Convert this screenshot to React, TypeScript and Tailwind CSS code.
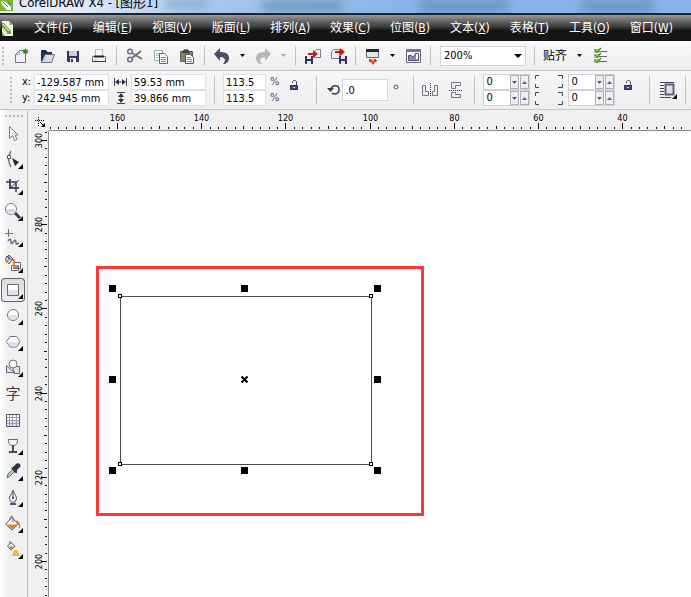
import { useEffect, useState } from "react";
import type { ReactNode } from "react";

const menus = [
  ["文件", "F"],
  ["编辑", "E"],
  ["视图", "V"],
  ["版面", "L"],
  ["排列", "A"],
  ["效果", "C"],
  ["位图", "B"],
  ["文本", "X"],
  ["表格", "T"],
  ["工具", "O"],
  ["窗口", "W"],
];

const UNIT = 8.42;

function Icon({ size = 20, children }: { size?: number; children: ReactNode }) {
  return (
    <svg width={size} height={size} viewBox={`0 0 ${size} ${size}`} fill="none" className="block shrink-0" aria-hidden="true">
      {children}
    </svg>
  );
}

function IconButton({ label, children }: { label: string; children: ReactNode }) {
  return (
    <button type="button" aria-label={label} className="flex h-6 w-[26px] shrink-0 items-center justify-center">
      <Icon>{children}</Icon>
    </button>
  );
}

function DropButton({ label, muted = false }: { label: string; muted?: boolean }) {
  return (
    <button type="button" aria-label={label} className="flex h-6 w-[15px] shrink-0 items-center justify-center">
      <svg width="5" height="3" viewBox="0 0 5 3" aria-hidden="true">
        <path d="M0 0h5L2.500 3z" fill={muted ? "#aaaaaa" : "#000000"} />
      </svg>
    </button>
  );
}

function Separator({ className = "" }: { className?: string }) {
  return <span className={`w-px shrink-0 bg-[#c3c3c7] ${className}`} />;
}

function Grip({ count, vertical = false }: { count: number; vertical?: boolean }) {
  return (
    <span className={vertical ? "flex shrink-0 flex-col gap-0.5" : "flex justify-center gap-0.5"}>
      {Array.from({ length: count }, (_, i) => (
        <span key={i} className="size-0.5 bg-[#bdbdbd]" />
      ))}
    </span>
  );
}

function TitleBar() {
  return (
    <header className="relative flex h-[13px] items-end overflow-hidden bg-linear-to-r from-[#e3edf7] from-10% via-[#a5c7ec] via-30% to-[#86b4e8] to-60%">
      <span className="absolute top-0 left-[166px] h-2 w-10 bg-[#5f87b4]/50 blur-xs" />
      <span className="absolute top-0 left-[262px] h-3 w-20 bg-[#54799f]/50 blur-xs" />
      <span className="absolute top-0 left-[420px] h-3 w-22 bg-[#54799f]/50 blur-xs" />
      <span className="absolute top-0 left-[582px] h-3 w-18 bg-[#54799f]/50 blur-xs" />
      <svg width="14" height="11" viewBox="0 0 14 11" className="mb-0.5 shrink-0" aria-hidden="true">
        <path d="M0 0h13v11H0z" fill="#7ab52c" />
        <path d="M1 1l5 1 5 5v3H7L2 5z" fill="#ffffff" />
        <path d="M3 2l5 5M8 2l3 3" stroke="#4d8417" />
      </svg>
      <h1 className="relative ml-[5px] text-[13px] leading-5 whitespace-nowrap text-black">CorelDRAW X4 - [图形1]</h1>
    </header>
  );
}

function MenuBar() {
  return (
    <nav className="flex h-7 items-center gap-5 overflow-hidden border-t-2 border-[#1d2430] bg-linear-to-b from-[#9a9a9a] via-[#3c3c3c] via-45% to-[#151515] to-60% text-xs text-white">
      <svg width="14" height="17" viewBox="0 0 14 17" className="shrink-0" aria-hidden="true">
        <path d="M2 1h7l4 4v11H2z" fill="#f4f8ee" />
        <path d="M9 1v4h4z" fill="#9ab77c" />
        <path d="M2 3h2l7 8v3H7L2 8z" fill="#6ea72b" />
        <path d="M3 4l6 7M3 8l4 5" stroke="#ffffff" />
        <path d="M2 12l3 4H2z" fill="#6ea72b" />
      </svg>
      {menus.map(([name, key]) => (
        <button key={name} type="button" className="shrink-0 leading-4 whitespace-nowrap">
          {name}(<span className="underline">{key}</span>)
        </button>
      ))}
    </nav>
  );
}

function Toolbar() {
  return (
    <div role="toolbar" aria-label="标准" className="flex h-[30px] items-center overflow-hidden border-b border-[#c6c6ca] bg-linear-to-b from-[#f9f9f9] to-[#ededee]">
      <span className="ml-0.5 flex w-1.5 shrink-0">
        <Grip count={5} vertical />
      </span>
      <IconButton label="新建">
        <path d="M4.500 16.500V8.500L8.500 4.500h6v12z" fill="#f1f1f7" stroke="#77778c" />
        <path d="M5 8.500h3.500V5" stroke="#a4a4b6" />
        <path d="M14.500 2.500v6M11.500 5.500h6M12.500 3.500l4 4M16.500 3.500l-4 4" stroke="#44a01e" />
        <circle cx="14.500" cy="5.500" r="2.300" fill="#2d8d0c" />
      </IconButton>
      <IconButton label="打开">
        <path d="M4 16V4h5l1.500 2H15v4H8z" fill="#262c4a" />
        <path d="M4.500 16.500L8 8.500h9.500l-3 8z" fill="#d9dbea" stroke="#666b88" />
      </IconButton>
      <IconButton label="保存">
        <path d="M4 5h12v11H5l-1-1z" fill="#34345f" />
        <path d="M6 5h8v5H6z" fill="#c9cbe4" />
        <path d="M7 12h6v4H7z" fill="#f5f5fa" />
        <path d="M8 13h2v3H8z" fill="#34345f" />
      </IconButton>
      <IconButton label="打印">
        <path d="M6.500 10V3.500h7V10" fill="#f5fbfb" stroke="#9cc0c0" />
        <path d="M3.500 10.500h13v5h-13z" fill="#f2f2ea" stroke="#77778a" />
        <path d="M5 10.500h10" stroke="#252538" strokeWidth="2" />
        <path d="M3 15.500h14" stroke="#34344e" />
        <path d="M5 13.500h3" stroke="#c1b86b" />
      </IconButton>
      <Separator className="ml-1 h-5" />
      <span className="ml-[5px] flex">
        <IconButton label="剪切">
          <circle cx="5" cy="5.500" r="2.300" stroke="#6c6c80" strokeWidth="1.500" />
          <circle cx="5" cy="13.500" r="2.300" stroke="#6c6c80" strokeWidth="1.500" />
          <path d="M7 7l10 6M7 12l9-7" stroke="#77777c" strokeWidth="2" />
        </IconButton>
        <IconButton label="复制">
          <path d="M3.500 4.500h8v10h-8z" fill="#f4fbf9" stroke="#8fb5ad" />
          <path d="M5 7.500h5M5 9.500h3M5 11.500h3" stroke="#9fc1ba" />
          <path d="M8.500 7.500h5l3 3v7h-8z" fill="#ffffff" stroke="#61617a" />
          <path d="M10 11.500h5M10 13.500h5M10 15.500h5" stroke="#7c7c95" />
        </IconButton>
        <IconButton label="粘贴">
          <path d="M3.500 5.500h12v10h-12z" fill="#8a8257" stroke="#676250" />
          <path d="M5 7c0-5 8-5 8 0z" fill="#44443e" />
          <path d="M8.500 8.500h5l3 3v6h-8z" fill="#ffffff" stroke="#55556f" />
          <path d="M10 11.500h4M10 13.500h5M10 15.500h5" stroke="#7c7c95" />
        </IconButton>
      </span>
      <Separator className="ml-1 h-5" />
      <span className="ml-1 flex">
        <IconButton label="撤消">
          <path d="M2 8l6-6v4c6 0 9 2 9 6s-3 6-6 6c3-3 3-7-3-7v4z" fill="#4e4e62" />
        </IconButton>
        <DropButton label="撤消列表" />
        <IconButton label="重做">
          <path d="M18 8l-6-6v4c-6 0-9 2-9 6s3 6 6 6c-3-3-3-7 3-7v4z" fill="#b7b7ba" />
        </IconButton>
        <DropButton label="重做列表" muted />
      </span>
      <Separator className="ml-1 h-5" />
      <span className="ml-1 flex">
        <IconButton label="导入">
          <path d="M11.500 11.500V5.500l2-2h4v8z" fill="#f3f3f8" stroke="#7b7b91" />
          <path d="M5 7h5V4l5 4-5 4V9H5z" fill="#c41c14" />
          <path d="M2 10h8v8H3l-1-1z" fill="#33335e" />
          <path d="M4 10h4v3H4zM4 15h4v3H4z" fill="#e5e6f3" />
        </IconButton>
        <IconButton label="导出">
          <path d="M2.500 12.500V5.500l2-2h6v9z" fill="#f3f3f8" stroke="#7b7b91" />
          <path d="M6 5h5V2l5 4-5 4V7H6z" fill="#c41c14" />
          <path d="M10 10h8v8h-7l-1-1z" fill="#33335e" />
          <path d="M12 10h4v3h-4zM12 15h4v3h-4z" fill="#e5e6f3" />
        </IconButton>
      </span>
      <Separator className="ml-[3px] h-5" />
      <span className="ml-[3px] flex">
        <IconButton label="应用程序启动器">
          <path d="M4.500 3.500h12v8h-12z" fill="#e3e3ea" stroke="#66667c" />
          <path d="M4 3h13v3H4z" fill="#252538" />
          <path d="M7 13h7l1 3-2 0-2 3-2-3-2 0z" fill="#ea3618" />
          <path d="M9 13h3l-1 3z" fill="#ffc027" />
        </IconButton>
        <DropButton label="应用程序列表" />
        <IconButton label="欢迎屏幕">
          <path d="M3.500 3.500h14v13h-14z" fill="#f4f4fb" stroke="#62627c" />
          <path d="M3 3h15v3H3z" fill="#77778f" />
          <path d="M5.500 9.500h3l2 2 2-4h3v7h-10z" fill="#8a8db9" stroke="#51516f" />
          <path d="M13 8h2v5h-2z" fill="#ffffff" />
        </IconButton>
      </span>
      <Separator className="ml-1 h-5" />
      <span className="relative ml-[9px] shrink-0">
        <select aria-label="缩放级别" defaultValue="200%" className="block h-5 w-[86px] appearance-none border border-[#cfd5de] bg-white pl-[3px] text-[11px] leading-4 text-black">
          <option>200%</option>
          <option>100%</option>
        </select>
        <svg width="8" height="4" viewBox="0 0 8 4" className="pointer-events-none absolute top-2 right-1" aria-hidden="true">
          <path d="M0 0h8L4 4z" fill="#000000" />
        </svg>
      </span>
      <Separator className="ml-2 h-5" />
      <button type="button" className="ml-2 flex shrink-0 items-center gap-2.5 text-xs leading-4">
        贴齐
        <svg width="5" height="3" viewBox="0 0 5 3" aria-hidden="true">
          <path d="M0 0h5L2.500 3z" fill="#000000" />
        </svg>
      </button>
      <span className="ml-[5px] flex">
        <IconButton label="选项">
          <path d="M9 5.500h8M9 10.500h8M9 15.500h8" stroke="#62627c" />
          <path d="M4.500 3.500h4v3h-4zM4.500 8.500h4v3h-4zM4.500 13.500h4v3h-4z" fill="#ffffff" stroke="#9ab28f" />
          <path d="M5 4l2 2 4-4M5 9l2 2 4-4M5 14l2 2 4-4" stroke="#3c9322" strokeWidth="1.500" />
        </IconButton>
      </span>
    </div>
  );
}

function Field({ label, value, className }: { label: string; value: string; className: string }) {
  return (
    <input
      aria-label={label}
      defaultValue={value}
      className={`block h-4 min-w-0 shrink-0 border border-[#dde2e9] bg-white px-0.5 text-[11px] leading-[14px] text-black ${className}`}
    />
  );
}

function SpinField({ label }: { label: string }) {
  return (
    <span className="flex h-4 items-center border border-[#cdd1d8] bg-white">
      <input aria-label={label} defaultValue="0" className="h-[14px] w-[26px] bg-transparent pl-0.5 text-[11px] leading-[14px]" />
      <button type="button" aria-label={`${label}减小`} className="flex h-[14px] w-[9px] items-center justify-center border border-[#b0b0b4] bg-[#efeff1]">
        <svg width="5" height="3" viewBox="0 0 5 3" className="shrink-0" aria-hidden="true">
          <path d="M0 0h5L2.500 3z" fill="#4a5f9e" />
        </svg>
      </button>
      <button type="button" aria-label={`${label}增大`} className="ml-px flex h-[14px] w-[9px] items-center justify-center border border-[#b0b0b4] bg-[#efeff1]">
        <svg width="5" height="3" viewBox="0 0 5 3" className="shrink-0" aria-hidden="true">
          <path d="M0 3h5L2.500 0z" fill="#4a5f9e" />
        </svg>
      </button>
    </span>
  );
}

function LockButton({ label }: { label: string }) {
  return (
    <button type="button" aria-label={label} className="mb-2.5 shrink-0">
      <svg width="10" height="11" viewBox="0 0 10 11" fill="none" className="block" aria-hidden="true">
        <path d="M3.500 3V2c0-2 4-2 4 0v3" stroke="#44445c" />
        <path d="M1.500 5.500h7v4h-7z" fill="#4a4f8c" stroke="#2b2b48" />
        <path d="M4 7h2v1H4z" fill="#bcc0e8" />
      </svg>
    </button>
  );
}

function PropertyBar() {
  return (
    <div role="toolbar" aria-label="属性栏" className="flex h-[39px] items-center overflow-hidden border-b border-[#c6c6ca] bg-linear-to-b from-[#f7f7f7] to-[#eeeeef] text-[11px] text-black">
      <span className="ml-2.5 flex w-3 shrink-0">
        <Grip count={7} vertical />
      </span>
      <span className="flex w-3 shrink-0 flex-col leading-4">
        <span>x:</span>
        <span>y:</span>
      </span>
      <span className="flex shrink-0 flex-col">
        <Field label="x" value="-129.587 mm" className="w-[75px]" />
        <Field label="y" value="242.945 mm" className="w-[75px]" />
      </span>
      <svg width="14" height="32" viewBox="0 0 14 32" fill="none" className="mx-1 shrink-0" aria-hidden="true">
        <path d="M1.500 4v8M13.500 4v8M3 8h9" stroke="#44445c" />
        <path d="M2 8l4-3v6zM13 8L9 5v6z" fill="#30304a" />
        <path d="M4 18.500h8M4 29.500h8M8 20v8" stroke="#44445c" />
        <path d="M8 19l3 4H5zM8 29l3-4H5z" fill="#30304a" />
      </svg>
      <span className="flex shrink-0 flex-col">
        <Field label="宽度" value="59.53 mm" className="w-[75px]" />
        <Field label="高度" value="39.866 mm" className="w-[75px]" />
      </span>
      <Separator className="ml-2 h-7" />
      <span className="ml-2 flex shrink-0 flex-col">
        <Field label="水平缩放" value="113.5" className="w-[43px]" />
        <Field label="垂直缩放" value="113.5" className="w-[43px]" />
      </span>
      <span className="mr-2.5 ml-1 flex shrink-0 flex-col leading-4 text-[#4a4a5e]">
        <span>%</span>
        <span>%</span>
      </span>
      <LockButton label="锁定比率" />
      <Separator className="ml-[17px] h-7" />
      <svg width="15" height="14" viewBox="0 0 15 14" fill="none" className="ml-2.5 shrink-0" aria-hidden="true">
        <path d="M4 6c1-5 9-4 8 1 0 4-5 5-7 3" stroke="#3d3d52" strokeWidth="1.500" />
        <path d="M0 5h7L3.500 9z" fill="#3d3d52" />
      </svg>
      <input aria-label="旋转角度" defaultValue=".0" className="h-[22px] w-[46px] shrink-0 border border-[#d3d8e0] bg-white pl-0.5 text-[11px]" />
      <svg width="6" height="6" viewBox="0 0 6 6" fill="none" className="mb-1.5 ml-[5px] shrink-0" aria-hidden="true">
        <circle cx="3" cy="3" r="2" stroke="#5f5f70" />
      </svg>
      <Separator className="ml-[14px] h-7" />
      <button type="button" aria-label="水平镜像" className="ml-2 shrink-0">
        <svg width="16" height="16" viewBox="0 0 16 16" fill="none" className="block" aria-hidden="true">
          <path d="M.5 3.500h3v6h3v4h-6zM15.500 3.500h-3v6h-2v4h5z" fill="#eeeef5" stroke="#74748a" />
          <path d="M8.500 1v14" stroke="#252532" strokeDasharray="1 1" />
        </svg>
      </button>
      <button type="button" aria-label="垂直镜像" className="ml-2.5 shrink-0">
        <svg width="16" height="16" viewBox="0 0 16 16" fill="none" className="block" aria-hidden="true">
          <path d="M3.500.5h9v3h-5v3h-4zM3.500 15.500h9v-3h-5v-2h-4z" fill="#eeeef5" stroke="#74748a" />
          <path d="M1 8.500h14" stroke="#252532" strokeDasharray="1 1" />
        </svg>
      </button>
      <Separator className="ml-2.5 h-7" />
      <span className="ml-2 flex shrink-0 flex-col">
        <SpinField label="左上角圆滑度" />
        <SpinField label="左下角圆滑度" />
      </span>
      <svg width="30" height="32" viewBox="0 0 30 32" fill="none" className="mx-1 shrink-0" aria-hidden="true">
        <g stroke="#44445c">
          <path d="M5 1.500H1.500V5M1.500 10v3.500H5M24 1.500h4.500V5M28.500 10v3.500H24" />
          <path d="M5 18.500H1.500V22M1.500 27v3.500H5M24 18.500h4.500V22M28.500 27v3.500H24" />
        </g>
      </svg>
      <span className="flex shrink-0 flex-col">
        <SpinField label="右上角圆滑度" />
        <SpinField label="右下角圆滑度" />
      </span>
      <span className="ml-2 flex">
        <LockButton label="全部圆角" />
      </span>
      <Separator className="ml-4 h-7" />
      <button type="button" aria-label="段落文本换行" className="ml-2.5 shrink-0">
        <svg width="18" height="17" viewBox="0 0 18 17" fill="none" className="block" aria-hidden="true">
          <path d="M0 .5h14M0 3.500h4M0 6.500h4M0 9.500h4M0 12.500h4M0 15.500h11" stroke="#44445c" />
          <path d="M5.500 2.500h8v10h-8z" fill="#dfe0ea" stroke="#62627a" strokeWidth="2" />
          <path d="M17 12v5h-5z" fill="#000000" />
        </svg>
      </button>
      <Separator className="ml-[7px] h-7" />
    </div>
  );
}

const tools: { label: string; flyout?: boolean; active?: boolean; art: ReactNode }[] = [
  {
    label: "挑选",
    art: <path d="M9.500 5.500v12l3-3 2 5 2.500-1-2-4.500h3z" fill="#f7f7fb" stroke="#79798d" />,
  },
  {
    label: "形状",
    flyout: true,
    art: (
      <>
        <path d="M11 4C8 9 8 15 11 20" stroke="#73738a" strokeWidth="1.500" />
        <path d="M7.500 8.500h3v3h-3z" fill="#ffffff" stroke="#55556d" />
        <path d="M12 11l7 4-4 4z" fill="#22223a" />
      </>
    ),
  },
  {
    label: "裁剪",
    flyout: true,
    art: (
      <>
        <path d="M6 9h10v10" stroke="#5b6a7b" strokeWidth="2" />
        <path d="M10 6v9h9" stroke="#4b4b63" strokeWidth="2" />
        <path d="M10 15l9-8" stroke="#3a3a50" />
      </>
    ),
  },
  {
    label: "缩放",
    flyout: true,
    art: (
      <>
        <path d="M15 14l5 5" stroke="#3d3d55" strokeWidth="3" />
        <circle cx="11" cy="10" r="5.500" fill="#ffffff" stroke="#77778c" />
        <path d="M6.500 10h9c0 5-9 5-9 0z" fill="#d3d4e4" />
      </>
    ),
  },
  {
    label: "手绘",
    flyout: true,
    art: (
      <>
        <path d="M8.500 4v8M5 8.500h8" stroke="#737391" />
        <path d="M8 16c2-3 3-2 3 1s2 1 3-1 2 0 2 2 1 1 3 0" stroke="#68688a" strokeWidth="1.500" />
      </>
    ),
  },
  {
    label: "智能填充",
    flyout: true,
    art: (
      <>
        <path d="M5 8l4-4 4 4-4 5z" fill="#dcdce5" stroke="#66667a" />
        <path d="M6 5l6 4M9 4v5" stroke="#474760" />
        <path d="M5 7l4 3-3 2z" fill="#d38b37" />
        <path d="M13.500 11.500h7v6h-7zM11.500 14.500h7v5h-7z" fill="#ffffff" stroke="#62627a" />
        <path d="M13 8h2v6h3v3h-5z" fill="#e78020" />
      </>
    ),
  },
  {
    label: "矩形",
    flyout: true,
    active: true,
    art: (
      <>
        <path d="M7.500 7.500h11v11h-11z" fill="#ffffff" stroke="#66667c" />
        <path d="M8 13h10v5H8z" fill="#dfe0ee" />
      </>
    ),
  },
  {
    label: "椭圆形",
    flyout: true,
    art: (
      <>
        <circle cx="13" cy="12" r="5.500" fill="#ffffff" stroke="#73738a" />
        <path d="M8 12h10c0 6-10 6-10 0z" fill="#dfe0ee" />
      </>
    ),
  },
  {
    label: "多边形",
    flyout: true,
    art: (
      <>
        <path d="M10 7.500h6.500l3.500 5-3.500 5.500H10l-3.500-5.500z" fill="#ffffff" stroke="#73738a" />
        <path d="M7 13h12l-3 4.500h-6z" fill="#dfe0ee" />
      </>
    ),
  },
  {
    label: "基本形状",
    flyout: true,
    art: (
      <>
        <path d="M6.500 10.500v7h8z" fill="#e2e3ef" stroke="#62627a" />
        <path d="M12.500 11.500h7v7h-5z" fill="#e2e3ef" stroke="#62627a" />
        <circle cx="13" cy="9" r="4" fill="#f5f5fb" stroke="#73738a" />
      </>
    ),
  },
  {
    label: "文本",
    art: (
      <text x="13" y="18" textAnchor="middle" fontSize="15" fill="#3f3f54">
        字
      </text>
    ),
  },
  {
    label: "表格",
    art: (
      <>
        <path d="M6.500 7.500h13v12h-13z" fill="#ffffff" stroke="#55556d" />
        <path d="M7 14h12v5H7z" fill="#dfe0ee" />
        <path d="M7 10.500h12M7 13.500h12M7 16.500h12M9.500 8v11M12.500 8v11M16.500 8v11" stroke="#9a9aae" />
      </>
    ),
  },
  {
    label: "交互式调和",
    flyout: true,
    art: (
      <>
        <path d="M8.500 6.500h9c0 4-1 6-4.500 6s-4.500-2-4.500-6z" fill="#f7f7fb" stroke="#66667c" />
        <path d="M13 12v7M9 19h8" stroke="#44445c" strokeWidth="2" />
      </>
    ),
  },
  {
    label: "滴管",
    flyout: true,
    art: (
      <>
        <path d="M7 19l1-4 5-5 2 2-5 5z" fill="#a8c9c7" stroke="#567777" />
        <path d="M11 9l2-1 3-3c2-2 6 1 4 3l-3 3v3h-2z" fill="#32324a" />
      </>
    ),
  },
  {
    label: "轮廓",
    flyout: true,
    art: (
      <>
        <path d="M13 5c-1 4-4 6-3.500 9l1.500 3h4l1.500-3C17 11 14 9 13 5z" fill="#eeeef5" stroke="#5b5b73" />
        <path d="M13 6v7" stroke="#44445c" />
        <circle cx="13" cy="13" r="1" fill="#33334a" />
        <path d="M10 19h6" stroke="#55556d" strokeWidth="2" />
      </>
    ),
  },
  {
    label: "填充",
    flyout: true,
    art: (
      <>
        <path d="M5.500 13L12 6.500 18 13l-6 6z" fill="#f8f8fb" stroke="#55556d" />
        <path d="M7 13.500h10L12 18z" fill="#e98313" />
        <path d="M10 9c0-5 3-5 3-1v3" stroke="#66667c" />
        <path d="M16 10c3 1 4 3 3.500 7" stroke="#e98313" strokeWidth="1.500" />
      </>
    ),
  },
  {
    label: "交互式填充",
    flyout: true,
    art: (
      <>
        <path d="M7.500 9L11 5.500 15 9l-4 4z" fill="#f5f5fa" stroke="#5d5d73" />
        <path d="M9 9.500h5L11 12z" fill="#cf6a32" />
        <path d="M10 7V4" stroke="#5d5d73" />
        <path d="M14 13h3l3 6h-8z" fill="#f4b63e" />
      </>
    ),
  },
];

function Toolbox() {
  return (
    <aside aria-label="工具箱" className="w-7 shrink-0 border-r border-[#c3c3c3] bg-linear-to-r from-white to-[#f0f0f0] to-30%">
      <div className="flex h-[11px] items-center justify-center">
        <Grip count={5} />
      </div>
      {tools.map((tool) => (
        <button
          key={tool.label}
          type="button"
          aria-label={tool.label}
          aria-pressed={tool.active ?? false}
          className={
            tool.active
              ? "m-px flex size-6 items-center justify-center rounded-sm bg-linear-to-b from-[#dcdcdc] to-[#eeeeee] inset-ring inset-ring-[#646464]"
              : "flex size-[26px] items-center justify-center"
          }
        >
          <Icon size={26}>
            {tool.art}
            {tool.flyout && <path d="M23 17v5h-5z" fill="#000000" />}
          </Icon>
        </button>
      ))}
    </aside>
  );
}

function useWindowSize() {
  const [size, setSize] = useState({ width: window.innerWidth, height: window.innerHeight });

  useEffect(() => {
    const update = () => setSize({ width: window.innerWidth, height: window.innerHeight });
    window.addEventListener("resize", update);
    return () => window.removeEventListener("resize", update);
  }, []);

  return size;
}

function tickLength(step: number) {
  if (step % 10 === 0) return 6;
  return step % 5 === 0 ? 3 : 2;
}

function HorizontalRuler({ length }: { length: number }) {
  return (
    <svg height="20" className="block w-full" aria-hidden="true">
      {Array.from({ length: Math.floor(length / UNIT) }, (_, i) => {
        const step = i - 8;
        const x = Math.round(68 + step * UNIT) + 0.5;
        return (
          <g key={i}>
            <path d={`M${x} ${19 - tickLength(step)}V19`} stroke="#111111" />
            {step % 10 === 0 && (
              <text x={x} y="11" textAnchor="middle" fontSize="9" fill="#000000">
                {Math.abs(160 - step * 2)}
              </text>
            )}
          </g>
        );
      })}
    </svg>
  );
}

function VerticalRuler({ length }: { length: number }) {
  return (
    <svg width="20" height="100%" className="absolute inset-0" aria-hidden="true">
      {Array.from({ length: Math.floor(length / UNIT) + 1 }, (_, i) => {
        const step = i - 1;
        const y = Math.round(9 + step * UNIT) + 0.5;
        return (
          <g key={i}>
            <path d={`M${19 - tickLength(step)} ${y}H19`} stroke="#111111" />
            {step % 10 === 0 && (
              <text transform={`translate(14 ${y}) rotate(-90)`} textAnchor="middle" fontSize="9" fill="#000000">
                {Math.abs(300 - step * 2)}
              </text>
            )}
          </g>
        );
      })}
    </svg>
  );
}

function Drawing() {
  const handles = [
    [60, 154],
    [192, 154],
    [325, 154],
    [60, 245],
    [325, 245],
    [60, 336],
    [192, 336],
    [325, 336],
  ];
  const nodes = [
    [69.5, 163.5],
    [320.5, 163.5],
    [69.5, 331.5],
    [320.5, 331.5],
  ];

  return (
    <svg width="100%" height="460" fill="none" className="block" role="img" aria-label="绘图页面">
      <rect x="48.500" y="136.500" width="325" height="247" stroke="#fb3737" strokeWidth="3" />
      <rect x="71.500" y="165.500" width="251" height="168" stroke="#4d4d4d" />
      {nodes.map(([x, y]) => (
        <rect key={`${x}-${y}`} x={x} y={y} width="3" height="3" fill="#ffffff" stroke="#000000" />
      ))}
      {handles.map(([x, y]) => (
        <rect key={`${x}-${y}`} x={x} y={y} width="7" height="7" fill="#000000" />
      ))}
      <path d="M192.500 245.500l6 6M198.500 245.500l-6 6" stroke="#000000" strokeWidth="2" />
    </svg>
  );
}

export default function App() {
  const { width, height } = useWindowSize();

  return (
    <div className="flex min-h-screen flex-col overflow-hidden bg-[#f0f0f0] font-['DejaVu_Sans_Condensed','Noto_Sans_CJK_SC',sans-serif]">
      <TitleBar />
      <MenuBar />
      <Toolbar />
      <PropertyBar />
      <div className="flex flex-1">
        <Toolbox />
        <main className="grid min-w-0 flex-1 grid-cols-[21px_minmax(0,1fr)] grid-rows-[21px_minmax(0,1fr)]">
          <div className="flex items-center justify-center pt-1 pl-1">
            <svg width="12" height="12" viewBox="0 0 12 12" fill="none" aria-hidden="true">
              <path d="M0 3.500h10M3.500 0v10" stroke="#000000" strokeDasharray="1 1" />
              <path d="M5 5l4 4" stroke="#000000" />
              <path d="M10 6v4H6z" fill="#000000" />
            </svg>
          </div>
          <div className="border-b border-[#8c8c8c]">
            <HorizontalRuler length={width - 49} />
          </div>
          <div className="relative border-r border-[#8c8c8c]">
            <VerticalRuler length={height - 131} />
          </div>
          <div className="bg-white">
            <Drawing />
          </div>
        </main>
      </div>
    </div>
  );
}
